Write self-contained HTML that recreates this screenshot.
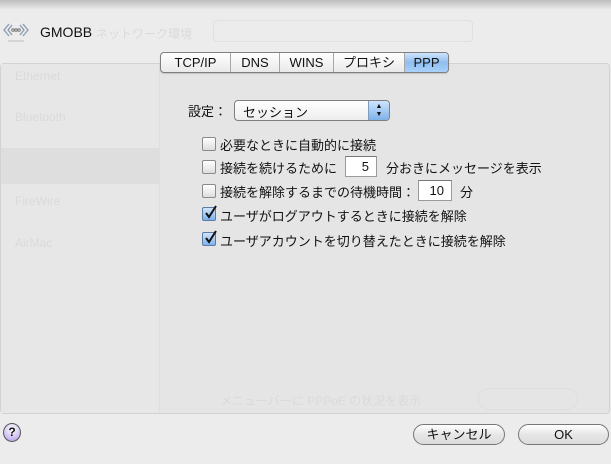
<!DOCTYPE html>
<html><head><meta charset="utf-8"><style>
*{margin:0;padding:0;box-sizing:border-box}
body{width:611px;height:464px;overflow:hidden;background:#ececec;font-family:"Liberation Sans","Noto Sans CJK JP",sans-serif;font-size:13px;color:#111;position:relative}
.topbar{position:absolute;left:0;top:0;width:611px;height:10px;background:linear-gradient(#bdbdbd,#ececec)}
.abs{position:absolute}
.panel{position:absolute;left:0;top:63px;width:610px;height:351px;background:#e5e5e5;border:1px solid #d2d2d2;border-radius:4px}
.side{position:absolute;left:1px;top:64px;width:159px;height:349px;background:#e7e7e7;border-right:1px solid #dedede}
.tabs{position:absolute;left:160px;top:52px;width:289px;height:21px;border:1px solid #7f7f7f;border-radius:4px;background:linear-gradient(#fff,#e9e9e9);display:flex;box-shadow:0 1px 1px rgba(0,0,0,.15)}
.tabs div{height:100%;line-height:19px;text-align:center;border-right:1px solid #a8a8a8;font-size:13px}
.tabs div:last-child{border-right:none;background:linear-gradient(#cfe4fb,#8fbef0 50%,#a9d1fb);border-radius:0 3px 3px 0}
.cb{position:absolute;width:14px;height:14px;border:1px solid #8a8a8a;border-radius:2px;background:linear-gradient(#fff,#ddd)}
.cb.on{background:linear-gradient(#cfe4fb,#7fb2ea);border-color:#5a7da8}
.lbl{position:absolute;font-size:13px;white-space:nowrap}
.field{position:absolute;height:21px;background:#fff;border:1px solid #9a9a9a;border-top-color:#777;text-align:right;padding-right:7px;line-height:20px}
.btn{position:absolute;height:21px;border:1px solid #777;border-radius:11px;background:linear-gradient(#fff,#e6e6e6 50%,#dcdcdc);text-align:center;line-height:19px}
.ghost{position:absolute;color:#dadada;font-size:12px;white-space:nowrap}
</style></head><body>
<div class="topbar"></div>
<svg class="abs" style="left:3px;top:20px" width="26" height="24" viewBox="0 0 26 24"><path d="M6 4 L1 10 L6 16 M9 5 L5 10 L9 15 M20 4 L25 10 L20 16 M17 5 L21 10 L17 15" stroke="#8a9bb0" stroke-width="1.3" fill="none"/><circle cx="10" cy="10" r="1.3" fill="none" stroke="#777"/><circle cx="13" cy="10" r="1.3" fill="none" stroke="#777"/><circle cx="16" cy="10" r="1.3" fill="none" stroke="#777"/><path d="M5 21 H21" stroke="#bbb"/></svg>
<div class="lbl" style="left:40px;top:24px;font-size:14px">GMOBB</div>
<div class="ghost" style="left:96px;top:25px">ネットワーク環境</div>
<div class="abs" style="left:213px;top:20px;width:260px;height:22px;border:1px solid #e0e0e0;border-radius:4px"></div>
<div class="panel"></div>
<div class="side"></div>
<div class="ghost" style="left:15px;top:69px">Ethernet</div>
<div class="ghost" style="left:15px;top:110px">Bluetooth</div>
<div class="abs" style="left:1px;top:148px;width:159px;height:36px;background:#dedede"></div>
<div class="ghost" style="left:15px;top:194px">FireWire</div>
<div class="ghost" style="left:15px;top:236px">AirMac</div>
<div class="tabs"><div style="width:70px">TCP/IP</div><div style="width:49px">DNS</div><div style="width:54px">WINS</div><div style="width:71px">プロキシ</div><div style="flex:1">PPP</div></div>
<div class="lbl" style="left:188px;top:101px">設定：</div>
<div class="abs" style="left:234px;top:100px;width:156px;height:21px;border:1px solid #7f7f7f;border-radius:4px;background:linear-gradient(#fff,#eee);overflow:hidden"><span style="position:absolute;left:8px;top:1px">セッション</span><div style="position:absolute;right:0;top:0;width:21px;height:100%;background:linear-gradient(#cfe4fb,#7fb2ea);border-left:1px solid #7f9cc0;font-size:7px;line-height:8px;text-align:center;padding-top:2px">▲<br>▼</div></div>
<div class="cb" style="left:202px;top:137px"></div><div class="lbl" style="left:220px;top:135px">必要なときに自動的に接続</div>
<div class="cb" style="left:202px;top:160px"></div><div class="lbl" style="left:220px;top:158px">接続を続けるために</div>
<div class="field" style="left:345px;top:156px;width:32px">5</div><div class="lbl" style="left:386px;top:158px">分おきにメッセージを表示</div>
<div class="cb" style="left:202px;top:184px"></div><div class="lbl" style="left:220px;top:182px">接続を解除するまでの待機時間：</div>
<div class="field" style="left:418px;top:180px;width:34px">10</div><div class="lbl" style="left:460px;top:182px">分</div>
<div class="cb on" style="left:202px;top:207px"></div><svg class="abs" style="left:203px;top:204px" width="15" height="16"><path d="M3 9 L6 13 L13 2" stroke="#111" stroke-width="2" fill="none"/></svg><div class="lbl" style="left:220px;top:206px">ユーザがログアウトするときに接続を解除</div>
<div class="cb on" style="left:202px;top:232px"></div><svg class="abs" style="left:203px;top:229px" width="15" height="16"><path d="M3 9 L6 13 L13 2" stroke="#111" stroke-width="2" fill="none"/></svg><div class="lbl" style="left:220px;top:231px">ユーザアカウントを切り替えたときに接続を解除</div>
<div class="ghost" style="left:220px;top:392px">メニューバーに PPPoE の状況を表示</div>
<div class="abs" style="left:478px;top:388px;width:100px;height:22px;border:1px solid #dedede;border-radius:11px"></div>
<div class="abs" style="left:3px;top:423px;width:18px;height:19px;border-radius:50%;border:1px solid #555;background:radial-gradient(circle at 50% 30%,#fff,#c9b8f0 70%,#a48ee0);text-align:center;font-weight:bold;font-size:12px;line-height:17px">?</div>
<div class="btn" style="left:413px;top:424px;width:92px">キャンセル</div>
<div class="btn" style="left:518px;top:424px;width:91px">OK</div>
</body></html>
